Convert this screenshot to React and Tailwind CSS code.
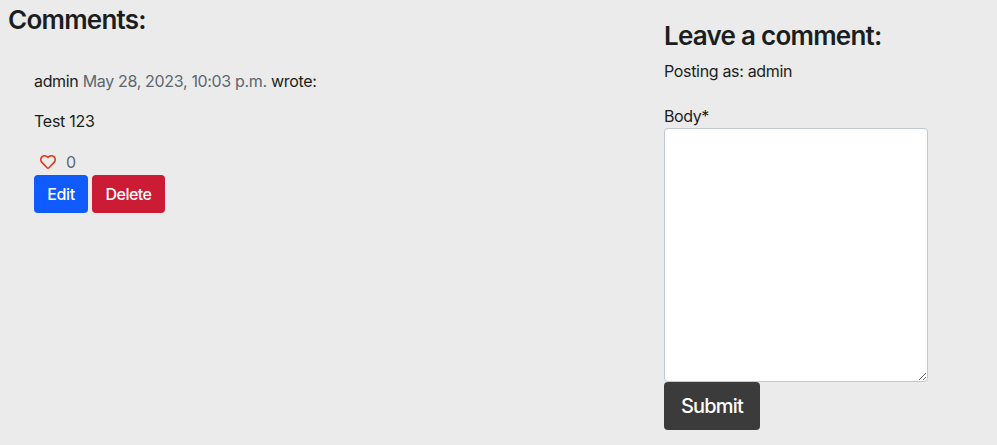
import { FaRegHeart } from "react-icons/fa";

function Comment() {
  return (
    <article className="pl-[26px] pt-8">
      <p className="h-6 whitespace-nowrap tracking-[-0.33px]">
        admin <span className="text-[#5c6770]">May 28, 2023, 10:03 p.m.</span> wrote:
      </p>
      <p className="mt-4 h-6 tracking-[-0.25px]">Test 123</p>
      <div className="mt-[17px] flex h-6 items-center pl-1.5 text-[#5c6770]">
        <FaRegHeart className="size-4 text-[#e2350f]" />
        <span className="ml-2.5">0</span>
      </div>
      <div className="mt-[1px] flex gap-1 font-medium text-white">
        <button className="h-[38px] w-[54px] rounded bg-[#0f5bff] tracking-[-0.35px]">Edit</button>
        <button className="h-[38px] w-[73px] rounded bg-[#cb1b35] tracking-[-0.55px]">Delete</button>
      </div>
    </article>
  );
}

function CommentForm() {
  return (
    <form className="flex w-[264px] flex-col items-start pt-[19px]">
      <h3 className="whitespace-nowrap text-[26px] font-semibold leading-[34px] tracking-[-0.75px]">
        Leave a comment:
      </h3>
      <p className="mt-1.5 h-6 tracking-[-0.33px]">Posting as: admin</p>
      <label htmlFor="body" className="mt-[21px] h-6 tracking-[-0.4px]">Body*</label>
      <textarea
        id="body"
        className="block h-[254px] w-[264px] resize rounded border border-[#c2c8d4] bg-white"
      />
      <button type="button" className="h-12 w-24 rounded bg-[#3b3b3b] text-xl font-medium tracking-[-0.8px] text-white">
        Submit
      </button>
    </form>
  );
}

export default function App() {
  return (
    <main className="flex h-[445px] w-[997px] overflow-hidden bg-[#ebebeb] pl-2 font-['Inter',sans-serif] text-base text-[#1a1e21]">
      <section className="w-[656px] shrink-0 pt-[3px]">
        <h3 className="text-[26px] font-semibold leading-[34px] tracking-[-0.75px]">Comments:</h3>
        <Comment />
      </section>
      <CommentForm />
    </main>
  );
}
